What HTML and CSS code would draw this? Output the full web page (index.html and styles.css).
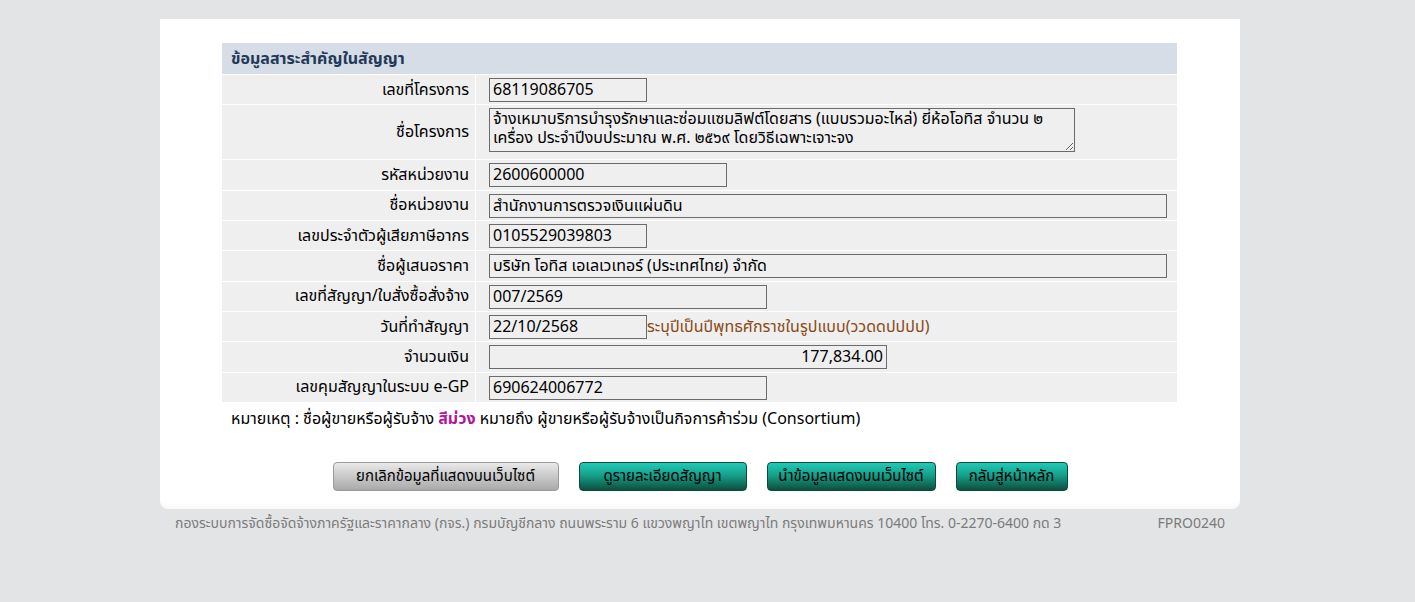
FILE: index.html
```html
<!DOCTYPE html>
<html lang="th">
<head>
    <meta charset="UTF-8">
    <title>ข้อมูลสาระสำคัญในสัญญา</title>
    <link rel="stylesheet" href="styles.css">
</head>
<body>
    <div class="page">
        <div class="box">
            <table class="info">
                <tr>
                    <th colspan="2">ข้อมูลสาระสำคัญในสัญญา</th>
                </tr>
                <tr>
                    <td class="label">เลขที่โครงการ</td>
                    <td><input class="w160" type="text" value="68119086705" readonly></td>
                </tr>
                <tr>
                    <td class="label">ชื่อโครงการ</td>
                    <td><textarea readonly>จ้างเหมาบริการบำรุงรักษาและซ่อมแซมลิฟต์โดยสาร (แบบรวมอะไหล่) ยี่ห้อโอทิส จำนวน ๒ เครื่อง ประจำปีงบประมาณ พ.ศ. ๒๕๖๙ โดยวิธีเฉพาะเจาะจง</textarea></td>
                </tr>
                <tr>
                    <td class="label">รหัสหน่วยงาน</td>
                    <td><input class="w240" type="text" value="2600600000" readonly></td>
                </tr>
                <tr>
                    <td class="label">ชื่อหน่วยงาน</td>
                    <td><input class="wfull" type="text" value="สำนักงานการตรวจเงินแผ่นดิน" readonly></td>
                </tr>
                <tr>
                    <td class="label">เลขประจำตัวผู้เสียภาษีอากร</td>
                    <td><input class="w160" type="text" value="0105529039803" readonly></td>
                </tr>
                <tr>
                    <td class="label">ชื่อผู้เสนอราคา</td>
                    <td><input class="wfull" type="text" value="บริษัท โอทิส เอเลเวเทอร์ (ประเทศไทย) จำกัด" readonly></td>
                </tr>
                <tr>
                    <td class="label">เลขที่สัญญา/ใบสั่งซื้อสั่งจ้าง</td>
                    <td><input class="w280" type="text" value="007/2569" readonly></td>
                </tr>
                <tr>
                    <td class="label">วันที่ทำสัญญา</td>
                    <td><input class="w160" type="text" value="22/10/2568" readonly><span class="hint">ระบุปีเป็นปีพุทธศักราชในรูปแบบ(ววดดปปปป)</span></td>
                </tr>
                <tr>
                    <td class="label">จำนวนเงิน</td>
                    <td><input class="w400 num" type="text" value="177,834.00" readonly></td>
                </tr>
                <tr>
                    <td class="label">เลขคุมสัญญาในระบบ e-GP</td>
                    <td><input class="w280" type="text" value="690624006772" readonly></td>
                </tr>
            </table>
            <p class="note">หมายเหตุ : ชื่อผู้ขายหรือผู้รับจ้าง <span class="purple">สีม่วง</span> หมายถึง ผู้ขายหรือผู้รับจ้างเป็นกิจการค้าร่วม (Consortium)</p>
            <div class="actions">
                <button class="btn gray">ยกเลิกข้อมูลที่แสดงบนเว็บไซต์</button>
                <button class="btn teal b168">ดูรายละเอียดสัญญา</button>
                <button class="btn teal b169">นำข้อมูลแสดงบนเว็บไซต์</button>
                <button class="btn teal b112">กลับสู่หน้าหลัก</button>
            </div>
        </div>
        <div class="footer">
            <span>กองระบบการจัดซื้อจัดจ้างภาครัฐและราคากลาง (กจร.) กรมบัญชีกลาง ถนนพระราม 6 แขวงพญาไท เขตพญาไท กรุงเทพมหานคร 10400 โทร. 0-2270-6400 กด 3</span>
            <span>FPRO0240</span>
        </div>
    </div>
</body>
</html>
```

FILE: styles.css
```css
body {
    margin: 0;
    padding: 0;
    background-color: #e3e4e6;
    font-family: Tahoma, "Noto Sans Thai", "Noto Sans", sans-serif;
    color: #000;
}
.page {
    width: 1080px;
    margin: 0 0 0 160px;
    padding-top: 19px;
}
.box {
    background: #fff;
    border-radius: 0 0 8px 8px;
    padding: 24px 62px 18px 62px;
    box-shadow: 0 -6px 8px -6px rgba(0,0,0,0.06) inset;
}
.info {
    width: 955px;
    border-collapse: collapse;
    font-size: 16px;
}
.info th {
    background-color: #d6dde6;
    color: #24385a;
    text-align: left;
    font-weight: bold;
    height: 31px;
    padding: 0 9px;
    border-bottom: 1px solid #fff;
}
.info td {
    background-color: #efefef;
    border: 1px solid #fff;
    height: 27.35px;
    padding: 1px 0;
}
.info td.label {
    width: 247px;
    text-align: right;
    padding-right: 6px;
    border-left: none;
}
.info td:last-child {
    padding-left: 13px;
    border-right: none;
}
input, textarea {
    font-family: inherit;
    font-size: 16px;
    background-color: #efefef;
    border: 1px solid #6b6b6b;
    padding: 0 3px;
    height: 24px;
    box-sizing: border-box;
    color: #000;
    vertical-align: middle;
    margin: 0;
}
textarea {
    width: 586px;
    height: 44px;
    resize: both;
    line-height: 19px;
    padding: 1px 3px;
    overflow: hidden;
    margin: 2px 0 6px;
}
.w160 { width: 158px; }
.w240 { width: 238px; }
.w280 { width: 278px; }
.w400 { width: 398px; }
.wfull { width: 678px; }
.num { text-align: right; }
.hint {
    color: #8a4a16;
    vertical-align: middle;
}
.note {
    margin: 4px 0 0 9px;
    font-size: 16px;
}
.purple {
    color: #b0179b;
    font-weight: bold;
}
.actions {
    display: flex;
    justify-content: center;
    gap: 20px;
    margin-top: 31px;
}
.btn {
    font-family: inherit;
    font-size: 15px;
    height: 29px;
    padding: 0;
    border-radius: 4px;
    color: #000;
    cursor: pointer;
}
.gray {
    width: 226px;
    border: 1px solid #9a9a9a;
    background: linear-gradient(#e9e9e9, #a9a9a9);
}
.teal {
    border: 1px solid #0d4a3a;
    background: linear-gradient(#21cab6, #15a08b 45%, #0d4f3d);
}
.b168 { width: 168px; }
.b169 { width: 169px; }
.b112 { width: 112px; }
.footer {
    display: flex;
    justify-content: space-between;
    padding: 4px 15px 0 15px;
    font-size: 14px;
    color: #7b7b7b;
}
```
